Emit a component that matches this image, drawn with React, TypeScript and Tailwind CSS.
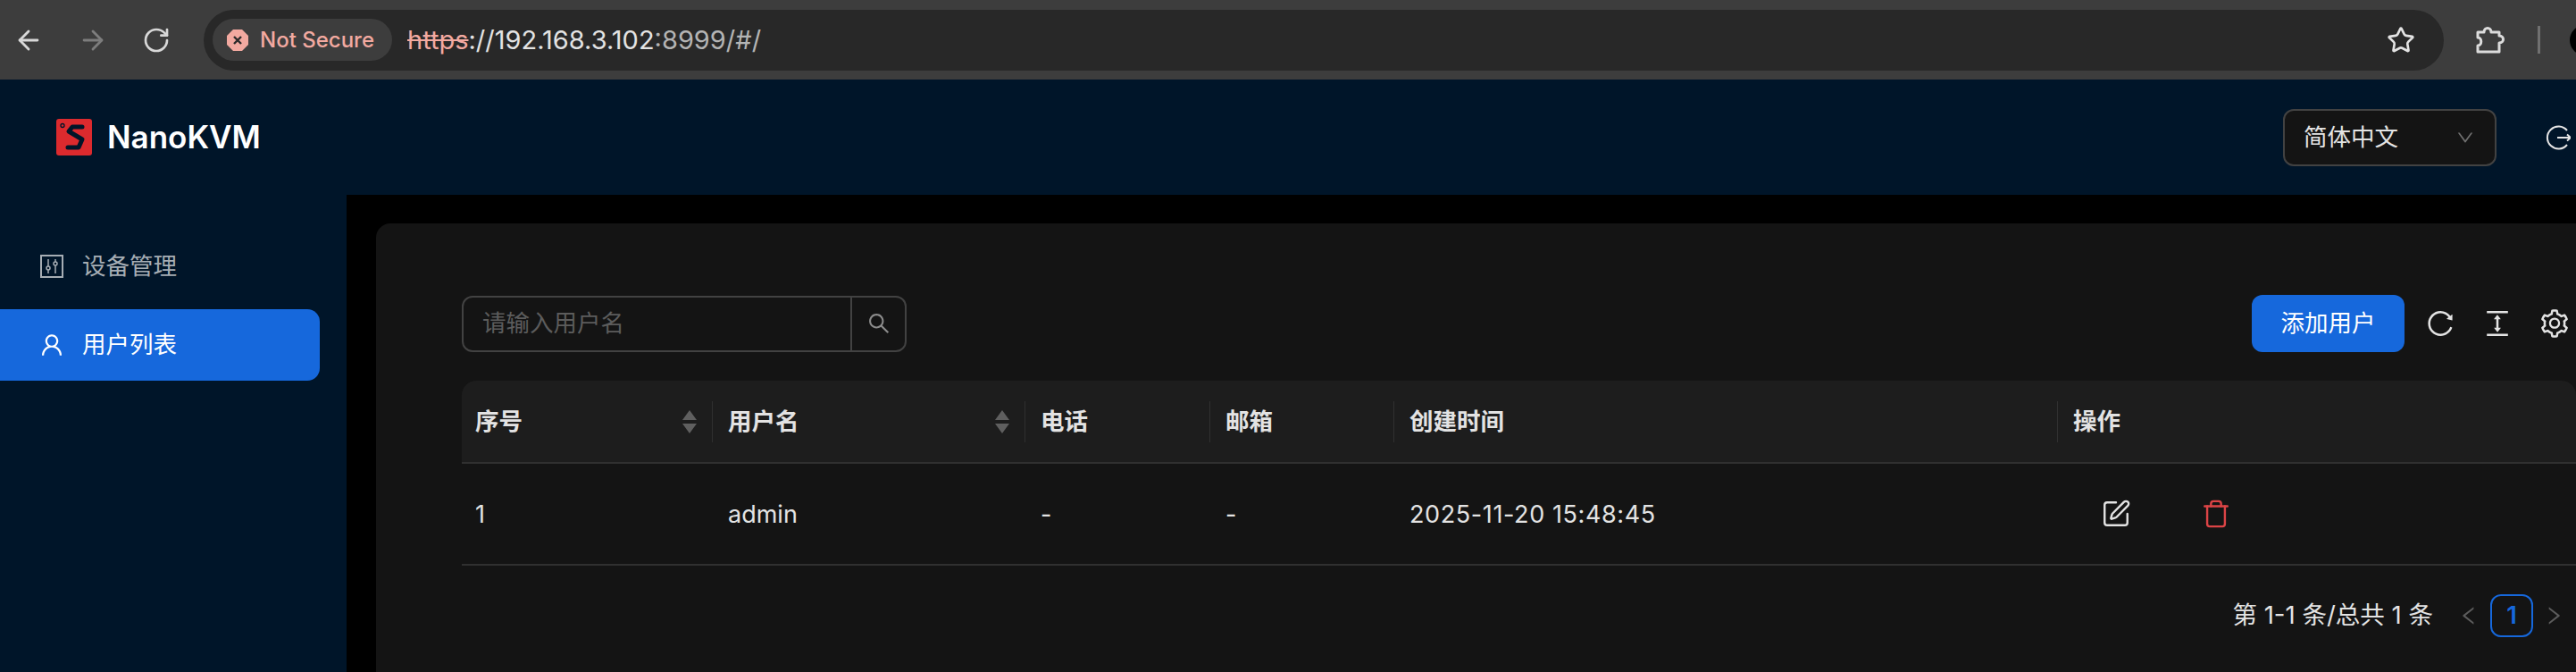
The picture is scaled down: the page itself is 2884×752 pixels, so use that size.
import { AiOutlineColumnHeight, AiOutlineReload, AiOutlineSearch, AiOutlineSetting, AiOutlineUser, AiOutlineDown, AiOutlineLeft, AiOutlineRight } from 'react-icons/ai';
import { ArrowLeft, ArrowRight, RotateCw, Star, SquarePen, Trash } from 'lucide-react';

const FONT = "font-['Inter','Noto_Sans_CJK_SC',sans-serif]";

function SortIcon() {
  return (
    <svg width="18" height="26" viewBox="0 0 18 26" className="shrink-0">
      <path d="M9 0 L17 11 L1 11 Z M1 15 L17 15 L9 26 Z" fill="#5f5f5f" />
    </svg>
  );
}

function Logo() {
  return (
    <svg width="40" height="41" viewBox="0 0 40 41" fill="none" className="shrink-0">
      <rect width="40" height="41" rx="3" fill="#dc2a2e" />
      <path d="M29 9 H18 L14 14 L29 23 L25 32 H13" stroke="#001529" strokeWidth="5" strokeLinejoin="round" strokeLinecap="round" />
      <circle cx="7" cy="7.5" r="2" stroke="#001529" strokeWidth="1.3" />
    </svg>
  );
}

function SlidersIcon() {
  return (
    <svg width="26" height="26" viewBox="0 0 26 26" fill="none" stroke="#a6adb4" strokeWidth="2">
      <rect x="1" y="1" width="24" height="24" />
      <path d="M9 5 V21 M17 5 V21" strokeWidth="1.5" />
      <circle cx="9" cy="15" r="2" fill="#001529" strokeWidth="1.5" />
      <circle cx="17" cy="10" r="2" fill="#001529" strokeWidth="1.5" />
    </svg>
  );
}

function LogoutIcon() {
  return (
    <svg width="28" height="28" viewBox="0 0 28 28" fill="none" stroke="#e6e6e6" strokeWidth="2">
      <path d="M24 6 A12.5 12.5 0 1 0 24 22" />
      <path d="M13 14 H28 M24 10.5 L28 14 L24 17.5" />
    </svg>
  );
}

function InsecureIcon() {
  return (
    <svg width="24" height="24" viewBox="0 0 24 24" className="shrink-0">
      <polygon points="7,0 17,0 24,7 24,17 17,24 7,24 0,17 0,7" fill="#f2a9a0" />
      <path d="M8 8 L16 16 M16 8 L8 16" stroke="#2a2a2a" strokeWidth="2.4" />
    </svg>
  );
}

function PuzzleIcon() {
  return (
    <svg width="34" height="31" viewBox="0 0 34 31" fill="none" stroke="#dcdcdc" strokeWidth="3" strokeLinejoin="round" className="ml-[35px] shrink-0">
      <path d="M3 7 H10 C10 1 18 1 18 7 H27 V11 C33 11 33 19 27 19 V29 H3 V22 C8 22 8 13 3 13 Z" />
    </svg>
  );
}

function Th({ label, width, sort, first, last }: { label: string; width: string; sort?: boolean; first?: boolean; last?: boolean }) {
  return (
    <div className={`${width} h-full flex items-center justify-between pr-[17px] relative ${first ? 'pl-[15px]' : 'pl-[17px]'}`}>
      <span className="text-[26.5px] font-semibold text-[#e3e3e3]">{label}</span>
      {sort && <SortIcon />}
      {!last && <span className="absolute right-0 top-[23px] h-[46px] w-px bg-[#303030]" />}
    </div>
  );
}

function Td({ children, width, first }: { children?: React.ReactNode; width: string; first?: boolean }) {
  return <div className={`${width} pt-[2px] text-[27px] text-[#e3e3e3] ${first ? 'pl-[15px]' : 'pl-[17px]'}`}>{children}</div>;
}

export default function App() {
  return (
    <div className={`${FONT} w-[2884px] h-[752px] overflow-hidden flex flex-col bg-black`}>
      {/* browser chrome */}
      <div className="h-[89px] shrink-0 bg-[#3d3d3d] flex items-center pl-[15px]">
        <ArrowLeft size={34} strokeWidth={2} className="text-[#d8d8d8] shrink-0" />
        <ArrowRight size={34} strokeWidth={2} className="text-[#7d7d7d] ml-[38px] shrink-0" />
        <RotateCw size={32} strokeWidth={2} className="text-[#d8d8d8] ml-[38px] shrink-0" />
        <div className="ml-[37px] w-[2508px] h-[68px] shrink-0 rounded-full bg-[#282828] flex items-center pl-[10px] pr-[32px]">
          <div className="h-[47px] w-[201px] rounded-full bg-[#3d3d3d] flex items-center pl-[16px] gap-[13px] shrink-0">
            <InsecureIcon />
            <span className="text-[24px] font-medium text-[#f2a9a0] whitespace-nowrap">Not Secure</span>
          </div>
          <div className="ml-[17px] text-[29px] text-[#e3e3e3] whitespace-nowrap">
            <span className="text-[#f2a9a0] line-through">https</span>://192.168.3.102<span className="text-[#b4b4b4]">:8999/#/</span>
          </div>
          <Star size={32} strokeWidth={2} className="ml-auto text-[#e3e3e3]" />
        </div>
        <PuzzleIcon />
        <span className="ml-[36px] h-[31px] w-[3px] bg-[#707070] shrink-0" />
        <span className="ml-[33px] w-[34px] h-[34px] rounded-full bg-black shrink-0" />
      </div>

      {/* app header */}
      <div className="h-[129px] shrink-0 bg-[#001529] flex items-center pl-[63px]">
        <Logo />
        <span className="ml-[17px] text-[35px] font-semibold text-white">NanoKVM</span>
        <div className="ml-auto w-[239px] h-[64px] rounded-[12px] border-2 border-[#424242] bg-[#141414] flex items-center pl-[21px] pr-[22px] justify-between">
          <span className="text-[26.5px] text-[#e3e3e3]">简体中文</span>
          <AiOutlineDown size={22} className="text-[#6f6f6f]" />
        </div>
        <div className="ml-[55px] mr-[6px] w-[28px] shrink-0">
          <LogoutIcon />
        </div>
      </div>

      <div className="flex flex-1 min-h-0">
        {/* sidebar */}
        <div className="w-[388px] shrink-0 bg-[#001529] pt-[56px]">
          <div className="h-[48px] flex items-center pl-[45px] gap-[21px] text-[26.5px] text-[#a6adb4]">
            <SlidersIcon />
            <span>设备管理</span>
          </div>
          <div className="mt-[24px] w-[358px] h-[80px] rounded-r-[14px] bg-[#1668dc] flex items-center pl-[43px] gap-[19px] text-[26.5px] text-white">
            <AiOutlineUser size={30} />
            <span>用户列表</span>
          </div>
        </div>

        {/* content */}
        <div className="flex-1 min-w-0 pt-[32px] pl-[33px]">
          <div className="h-full rounded-tl-[16px] bg-[#141414] pt-[80px] pl-[96px]">
            <div className="flex items-center h-[64px]">
              <div className="w-[498px] h-[63px] rounded-[12px] border-2 border-[#424242] flex items-center">
                <span className="flex-1 pl-[21px] text-[26.5px] text-[#5c5c5c]">请输入用户名</span>
                <span className="w-[61px] h-full border-l-2 border-[#424242] flex items-center justify-center">
                  <AiOutlineSearch size={28} className="text-[#8c8c8c]" />
                </span>
              </div>
              <div className="ml-auto w-[171px] h-[64px] rounded-[12px] bg-[#1668dc] text-white text-[26.5px] flex items-center justify-center">添加用户</div>
              <AiOutlineReload size={34} className="ml-[23px] text-[#e3e3e3] shrink-0" />
              <AiOutlineColumnHeight size={36} className="ml-[29px] text-[#e3e3e3] shrink-0" />
              <AiOutlineSetting size={36} className="ml-[28px] mr-[6px] text-[#e3e3e3] shrink-0" />
            </div>

            <div className="mt-[32px] h-[93px] rounded-t-[16px] bg-[#1d1d1d] border-b-2 border-[#303030] flex items-center">
              <Th label="序号" width="w-[281px]" sort first />
              <Th label="用户名" width="w-[350px]" sort />
              <Th label="电话" width="w-[207px]" />
              <Th label="邮箱" width="w-[206px]" />
              <Th label="创建时间" width="w-[743px]" />
              <Th label="操作" width="flex-1" last />
            </div>
            <div className="h-[114px] border-b-2 border-[#303030] flex items-center">
              <Td width="w-[281px]" first>1</Td>
              <Td width="w-[350px]">admin</Td>
              <Td width="w-[207px]">-</Td>
              <Td width="w-[206px]">-</Td>
              <Td width="w-[743px]"><span className="tracking-[0.6px]">2025-11-20 15:48:45</span></Td>
              <div className="flex-1 flex items-center pl-[48px]">
                <SquarePen size={34} strokeWidth={1.7} className="text-[#e3e3e3]" />
                <Trash size={34} strokeWidth={1.7} className="ml-[78px] text-[#dc4446]" />
              </div>
            </div>

            <div className="mt-[32px] flex items-center h-[48px] text-[27.5px] text-[#e3e3e3]">
              <span className="ml-auto whitespace-nowrap">第 1-1 条/总共 1 条</span>
              <AiOutlineLeft size={26} className="ml-[27px] text-[#5c5c5c]" />
              <span className="ml-[11px] w-[48px] h-[48px] rounded-[12px] border-2 border-[#1668dc] text-[#1668dc] font-semibold flex items-center justify-center">1</span>
              <AiOutlineRight size={26} className="ml-[10px] mr-[12px] text-[#5c5c5c]" />
            </div>
          </div>
        </div>
      </div>
    </div>
  );
}
